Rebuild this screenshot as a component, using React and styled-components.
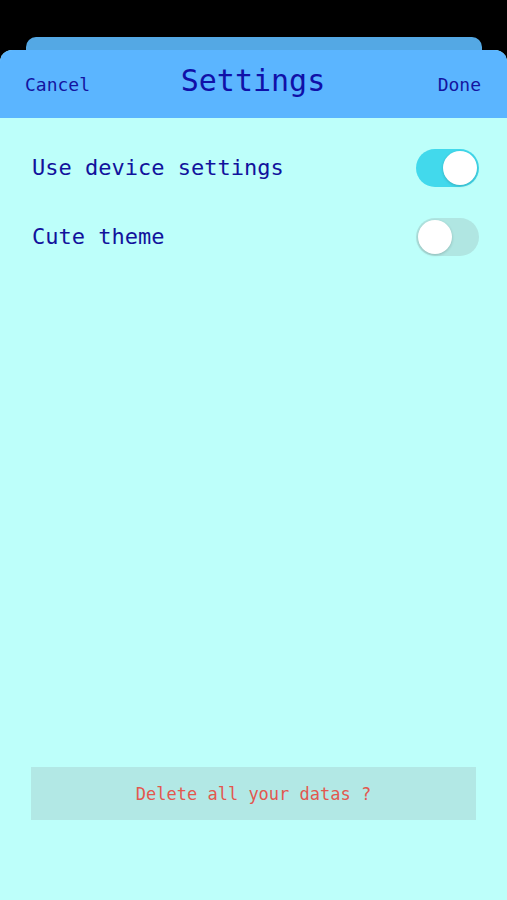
import React from "react";
import styled, { createGlobalStyle } from "styled-components";

const Global = createGlobalStyle`
  html, body { margin: 0; padding: 0; background: #000; }
  body { font-family: "DejaVu Sans Mono", "Liberation Mono", monospace; }
`;

const Screen = styled.div`
  height: 900px;
  display: flex;
  flex-direction: column;
  padding-top: 37px;
  box-sizing: border-box;
  background: #000;
`;

const BackSheet = styled.div`
  height: 13px;
  margin: 0 25px 0 26px;
  background: #54a8e4;
  border-radius: 10px 10px 0 0;
  flex: none;
`;

const Sheet = styled.div`
  flex: 1;
  display: flex;
  flex-direction: column;
  background: #bdfffa;
  border-radius: 12px 12px 0 0;
  overflow: hidden;
`;

const Header = styled.div`
  height: 68px;
  flex: none;
  background: #5bb5ff;
  display: grid;
  grid-template-columns: 1fr auto 1fr;
  align-items: center;
  padding: 0 26px 0 25px;
`;

const NavButton = styled.span`
  font-size: 18px;
  color: #1414a0;
  justify-self: ${(p) => (p.$end ? "end" : "start")};
  margin-top: 1px;
`;

const Title = styled.span`
  font-size: 30px;
  color: #1010a8;
  margin-bottom: 8px;
`;

const List = styled.div`
  padding-top: 15px;
  display: flex;
  flex-direction: column;
`;

const Row = styled.div`
  height: 69px;
  display: flex;
  align-items: center;
  justify-content: space-between;
  padding: 0 28px 0 32px;
`;

const Label = styled.span`
  font-size: 22px;
  color: #12129c;
`;

const Track = styled.div`
  width: 63px;
  height: 38px;
  border-radius: 19px;
  background: ${(p) => (p.$on ? "#42d9ec" : "#b0e6e2")};
  display: flex;
  align-items: center;
  justify-content: ${(p) => (p.$on ? "flex-end" : "flex-start")};
  padding: 0 2px;
  box-sizing: border-box;
`;

const Knob = styled.div`
  width: 34px;
  height: 34px;
  border-radius: 50%;
  background: #fff;
  box-shadow: 0 1px 3px rgba(0, 0, 0, 0.2);
`;

const Spacer = styled.div`
  flex: 1;
`;

const DangerButton = styled.div`
  margin: 0 31px 80px 31px;
  height: 53px;
  background: #b2e8e5;
  display: flex;
  align-items: center;
  justify-content: center;
  font-size: 17px;
  color: #e2584f;
`;

function Toggle({ on }) {
  return (
    <Track $on={on}>
      <Knob />
    </Track>
  );
}

export default function App() {
  return (
    <>
      <Global />
      <Screen>
        <BackSheet />
        <Sheet>
          <Header>
            <NavButton>Cancel</NavButton>
            <Title>Settings</Title>
            <NavButton $end>Done</NavButton>
          </Header>
          <List>
            <Row>
              <Label>Use device settings</Label>
              <Toggle on />
            </Row>
            <Row>
              <Label>Cute theme</Label>
              <Toggle on={false} />
            </Row>
          </List>
          <Spacer />
          <DangerButton>Delete all your datas ?</DangerButton>
        </Sheet>
      </Screen>
    </>
  );
}
